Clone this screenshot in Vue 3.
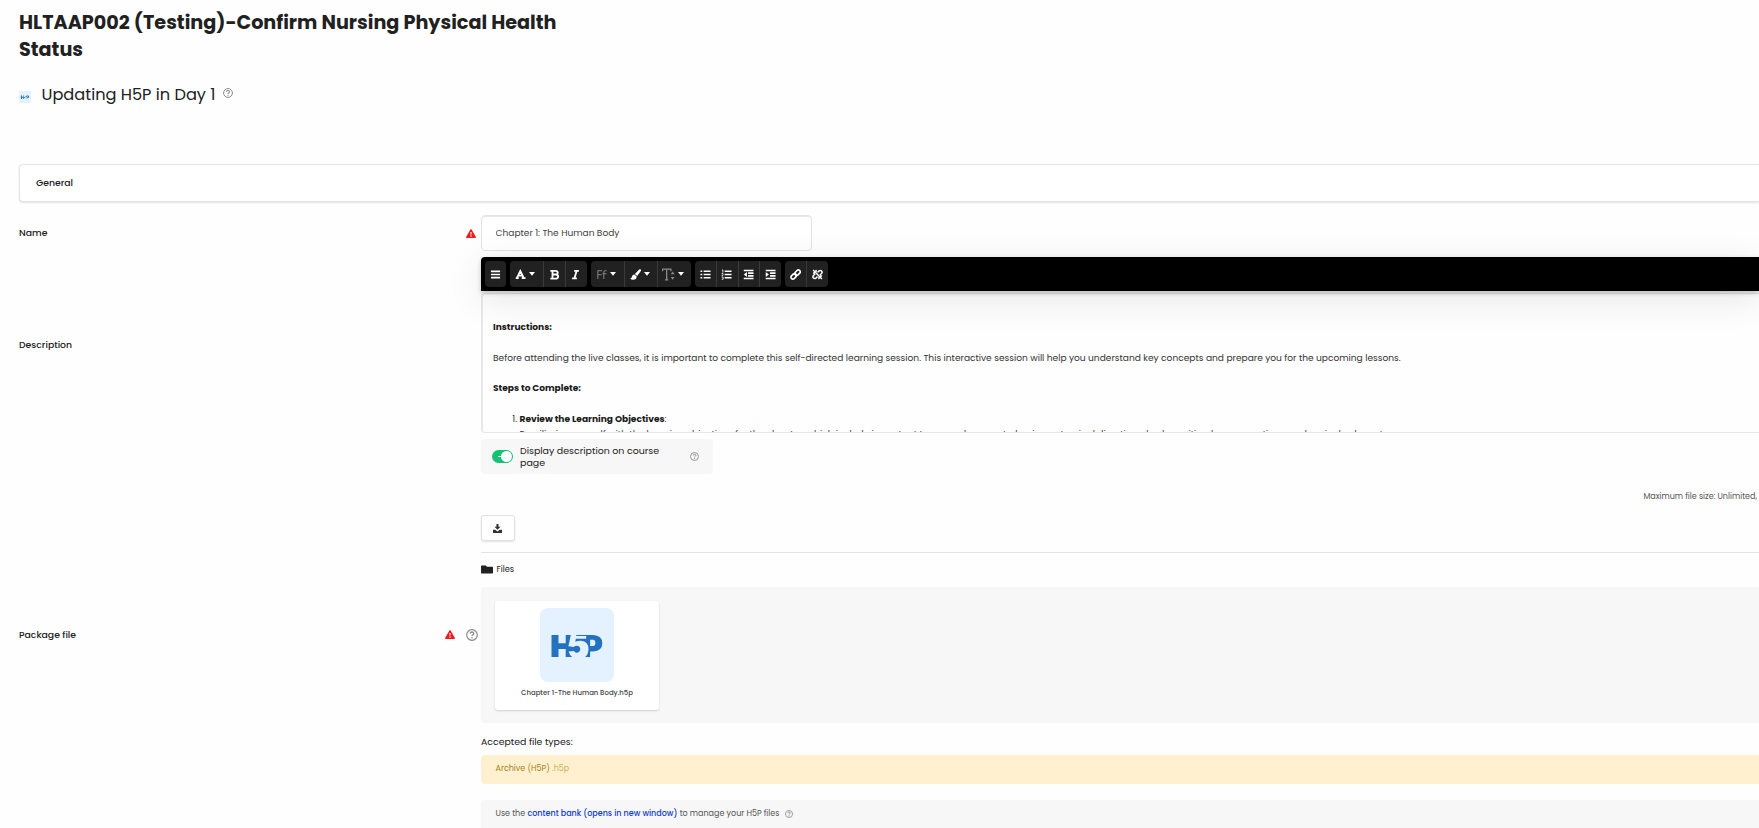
<template>
  <div class="page">
    <header class="head">
      <h1 class="title">HLTAAP002 (Testing)-Confirm Nursing Physical Health<br />Status</h1>
      <div class="subhead">
        <svg class="mini" viewBox="0 0 74 74">
          <rect width="74" height="74" rx="8" fill="#e4f2ff" />
          <use href="#h5p-mark" />
        </svg>
        <h2 class="subtitle">Updating H5P in Day 1</h2>
        <svg class="help help-title" viewBox="0 0 12 12"><use href="#help" /></svg>
      </div>
    </header>

    <section class="section-bar">General</section>

    <!-- Name -->
    <div class="row row-name">
      <div class="label">
        <span>Name</span>
        <svg class="warn" viewBox="0 0 10 9"><use href="#warn" /></svg>
      </div>
      <input class="input" type="text" v-model="name" />
    </div>

    <!-- Description -->
    <div class="row row-desc">
      <div class="label"><span>Description</span></div>
      <div class="content">
        <div class="toolbar">
          <div v-for="(group, g) in toolbar" :key="g" class="group">
            <button v-for="tool in group" :key="tool.icon" :class="['tool', { wide: tool.menu }]">
              <svg :class="['tool-icon', { big: tool.big }]" viewBox="0 0 12 12"><use :href="'#' + tool.icon" /></svg>
              <svg v-if="tool.menu" class="caret" viewBox="0 0 6 4"><path d="M0 0h6L3 3.8z" fill="#fff" /></svg>
            </button>
          </div>
        </div>
        <div class="editor">
          <p><b>Instructions:</b></p>
          <p>Before attending the live classes, it is important to complete this self-directed learning session. This interactive session will help you understand key concepts and prepare you for the upcoming lessons.</p>
          <p><b>Steps to Complete:</b></p>
          <ol>
            <li>
              <b>Review the Learning Objectives</b>:<br />
              Familiarize yourself with the learning objectives for the chapter, which include important terms and concepts, basic anatomical directions, body cavities, key connections, and major body parts.
            </li>
          </ol>
        </div>
        <div class="display-box">
          <button class="switch" @click="shown = !shown"><i :class="['knob', { off: !shown }]" /></button>
          <span class="display-text">Display description on course<br />page</span>
          <svg class="help help-sm" viewBox="0 0 12 12"><use href="#help" /></svg>
        </div>
      </div>
    </div>

    <!-- Package file -->
    <div class="row row-file">
      <div class="label">
        <span>Package file</span>
        <svg class="warn" viewBox="0 0 10 9"><use href="#warn" /></svg>
        <svg class="help help-lg" viewBox="0 0 12 12"><use href="#help" /></svg>
      </div>
      <div class="content">
        <div class="limits">Maximum file size: Unlimited,</div>
        <button class="download">
          <svg viewBox="0 0 12 12" width="9" height="9">
            <path d="M4.6 0h2.8v3.8H10L6 7.8 2 3.8h2.6zM0 7.5h3l3 2.4 3-2.4h3V12H0z" fill="#333" />
          </svg>
        </button>
        <div class="path">
          <svg viewBox="0 0 12 9" width="12" height="9"><path d="M.8.5h4l1.2 1.2h5.2q.8 0 .8.8v5.2q0 .8-.8.8H.8q-.8 0-.8-.8V1.3Q0 .5.8.5z" fill="#212121" /></svg>
          <span>Files</span>
        </div>
        <div class="files">
          <div class="card">
            <svg viewBox="0 0 74 74" width="74" height="74">
              <rect width="74" height="74" rx="8" fill="#e4f2ff" />
              <use href="#h5p-mark" />
            </svg>
            <span class="file-name">Chapter 1-The Human Body.h5p</span>
          </div>
        </div>
        <p class="accepted">Accepted file types:</p>
        <div class="types">Archive (H5P) <small>.h5p</small></div>
        <div class="bank">
          <span>Use the</span>
          <a href="#">content bank (opens in new window)</a>
          <span>to manage your H5P files</span>
          <svg class="help help-bank" viewBox="0 0 12 12"><use href="#help" /></svg>
        </div>
      </div>
    </div>

    <!-- Shared symbols -->
    <svg class="defs" width="0" height="0">
      <symbol id="help" viewBox="0 0 12 12">
        <circle cx="6" cy="6" r="5.3" fill="none" stroke="#8a8a8a" stroke-width="1.2" />
        <path d="M4.2 4.7q.2-1.7 1.8-1.7t1.8 1.5q0 .9-1 1.4-.8.4-.8 1.2" fill="none" stroke="#8a8a8a" stroke-width="1.300" />
        <circle cx="6" cy="8.8" r=".8" fill="#8a8a8a" />
      </symbol>
      <symbol id="warn" viewBox="0 0 10 9">
        <path d="M5 0q.4 0 .6.4L9.9 8q.2.9-.6 1H.7q-.8-.1-.6-1L4.4.4Q4.6 0 5 0z" fill="#ee1c1c" />
        <path d="M4.4 2.9h1.2l-.2 2.9h-.8zM4.4 6.500h1.2v1.2H4.400z" fill="#fff" />
      </symbol>
      <symbol id="h5p-mark" viewBox="0 0 74 74">
        <g fill="#2372c0">
          <path d="M11.500 27h7v8.300h7.200V27h5.100l-2.400 11.300 5.400.8q1-1.300 3-1.300a3.400 3.400 0 1 1-2.900 5.100l-5.300.7q.8 3.500 3.600 5.400h-6.500v-8h-7.200v8h-7z" />
          <path d="M36.200 27H53q9.300.4 9.300 8.200 0 7.700-9.100 8.200h-3.100V49h-5q3.400-2.800 3.400-8 0-7.500-7.300-8.300-3.500-.2-5.900 1.100l.5-3h10.400v-2.800h-10z" />
        </g>
        <path d="M50.100 31.800h3q2.300.2 2.300 3.200 0 2.900-2.300 3h-3z" fill="#e4f2ff" />
      </symbol>
      <symbol id="lines" viewBox="0 0 12 12">
        <path d="M1 2.600h10M1 6h10M1 9.400h10" stroke="#fff" stroke-width="1.700" />
      </symbol>
      <symbol id="font" viewBox="0 0 12 12">
        <path d="M2 10 5.800 2.200 9.600 10M3.500 7.200h4.300M.8 10h3.300M7.300 10h4.200" fill="none" stroke="#fff" stroke-width="2" />
      </symbol>
      <symbol id="bold" viewBox="0 0 12 12">
        <path d="M1.500 2h5.300q2.700 0 2.700 2t-2.500 2q3 0 3 2.100 0 2.400-3 2.400H1.500M3.800 2v8.400M3.800 6h3.300" fill="none" stroke="#fff" stroke-width="2" />
      </symbol>
      <symbol id="italic" viewBox="0 0 12 12">
        <path d="M4.500 2h5.200M2.300 10.300h5.200M7.300 2 4.800 10.300" fill="none" stroke="#fff" stroke-width="2" />
      </symbol>
      <symbol id="family" viewBox="0 0 12 12">
        <path d="M2 11V2h4.700M2 6.300h4.200M8.500 11V5M7 5.300h4.500M8.500 6V3.500q0-1.500 1.500-1.500h1.500" fill="none" stroke="#858585" stroke-width="1.100" />
      </symbol>
      <symbol id="brush" viewBox="0 0 12 12">
        <path d="M11.700.5q.7.900-.1 2L7.900 7.600 5.300 5.400 10 .6q1-.8 1.700-.1zM4.700 6l2.600 2.200q-.2 3.500-3.900 3.500Q1.200 11.700.2 10.300q1.700 0 2-2Q2.700 6.200 4.700 6z" fill="#fff" />
      </symbol>
      <symbol id="size" viewBox="0 0 12 12">
        <path d="M.5 3V1h7.700v2M4.300 1v10M2.800 11h3" fill="none" stroke="#8a8a8a" stroke-width="1.200" />
        <path d="M8 5.800 9.800 3.300l1.800 2.500zM8 8.300h3.600L9.800 10.800z" fill="#8a8a8a" />
      </symbol>
      <symbol id="ul" viewBox="0 0 12 12">
        <path d="M.5 2.500h2M.5 6h2M.5 9.500h2M4 2.500h7.500M4 6h7.500M4 9.500h7.500" stroke="#fff" stroke-width="1.700" />
      </symbol>
      <symbol id="ol" viewBox="0 0 12 12">
        <path d="M4 2.500h7.500M4 6h7.500M4 9.500h7.500" stroke="#fff" stroke-width="1.600" />
        <path d="M1 1h1v3M.7 5h1.500v1L1 7.300h1.400M.8 8.800h1.500v2.400H.8" fill="none" stroke="#fff" stroke-width=".9" />
      </symbol>
      <symbol id="outdent" viewBox="0 0 12 12">
        <path d="M.8 1.600h10.700M5.500 4.500h6M5.500 7.500h6M.8 10.400h10.700" stroke="#fff" stroke-width="1.700" />
        <path d="M4.300 3.300v5.400L.8 6z" fill="#fff" />
      </symbol>
      <symbol id="indent" viewBox="0 0 12 12">
        <path d="M.8 1.600h10.700M5.500 4.500h6M5.500 7.500h6M.8 10.400h10.700" stroke="#fff" stroke-width="1.700" />
        <path d="M.8 3.300v5.400L4.300 6z" fill="#fff" />
      </symbol>
      <symbol id="link" viewBox="0 0 12 12">
        <g fill="none" stroke="#fff" stroke-width="1.800">
          <rect x="4.900" y="2" width="6.600" height="4.100" rx="2" transform="rotate(-45 8.200 4.050)" />
          <rect x=".7" y="6" width="6.600" height="4.100" rx="2" transform="rotate(-45 4 8.050)" />
        </g>
      </symbol>
      <symbol id="unlink" viewBox="0 0 12 12">
        <path d="M6 3.700 7.800 2q1.400-1 2.600.1t0 2.800L8.500 6.500M6 8.300 4.200 10q-1.400 1-2.600-.1t0-2.800L3.500 5.500M1.200 1.200l9.600 9.600M1 4.300l2.200.3M4.300 1l.3 2.200M11 7.700l-2.200-.3M7.700 11l-.3-2.200" fill="none" stroke="#fff" stroke-width="1.600" />
      </symbol>
    </svg>
  </div>
</template>

<script setup>
import { ref } from 'vue'

const name = ref('Chapter 1: The Human Body')
const shown = ref(true)

const toolbar = [
  [{ icon: 'lines' }],
  [{ icon: 'font', menu: true }, { icon: 'bold' }, { icon: 'italic' }],
  [{ icon: 'family', menu: true }, { icon: 'brush', menu: true }, { icon: 'size', menu: true, big: true }],
  [{ icon: 'ul' }, { icon: 'ol' }, { icon: 'outdent' }, { icon: 'indent' }],
  [{ icon: 'link' }, { icon: 'unlink' }],
]
</script>

<style>
body {
  margin: 0;
  background: #fefefe;
  overflow: hidden;
}
</style>

<style scoped>
* { box-sizing: border-box; }

.page {
  height: 828px;
  padding-left: 19px;
  overflow: hidden;
  font-family: Poppins, Inter, 'Open Sans', sans-serif;
  font-size: 9.3px;
  line-height: 14px;
  color: #212121;
  white-space: nowrap;
}

/* ─── Heading ─── */
.head { height: 164px; padding-top: 9px; }
.title {
  margin: 0;
  font-size: 19.2px;
  font-weight: 700;
  line-height: 27px;
}
.subhead { display: flex; align-items: center; height: 24px; margin-top: 20px; }
.mini { width: 12px; height: 12px; margin: 3px 10.5px 0 0; }
.subtitle { margin: 0; font-size: 16.2px; font-weight: 400; line-height: 24px; }
.help { flex: none; display: block; }
.help-title { width: 10px; height: 10px; margin: -4px 0 0 8px; }

.section-bar {
  height: 38px;
  padding: 0 16px;
  border: 1px solid #e2e5ec;
  border-right: 0;
  border-radius: 4px 0 0 4px;
  background: #fff;
  box-shadow: 0 1px 2px rgba(0, 0, 0, 0.12);
  line-height: 36px;
  font-weight: 500;
}

/* ─── Rows ─── */
.row { display: flex; }
.label { display: flex; flex: none; align-items: center; width: 462px; font-weight: 500; }
.label .warn { margin-left: auto; }
.warn { width: 10px; height: 9px; }
.content { flex: 1; min-width: 0; }
.row-name { height: 42px; margin-top: 13px; align-items: flex-start; }
.row-name .label { height: 36px; padding-right: 5px; }
.input {
  width: 331px;
  height: 36px;
  padding: 0 13.5px;
  border: 1px solid #e3e3e3;
  border-radius: 4px;
  background: #fff;
  box-shadow: inset 0 1px 1px rgba(0, 0, 0, 0.1);
  color: #424242;
  font: inherit;
  font-size: 9.05px;
  outline: none;
}
.row-desc { height: 217px; }
.row-desc .label { height: 176px; }

/* ─── Toolbar ─── */
.toolbar {
  position: relative;
  display: flex;
  gap: 4px;
  height: 34px;
  padding: 4px;
  border-radius: 4px 0 0 0;
  background: #000;
  box-shadow: 0 2px 4px rgba(0, 0, 0, 0.22), 0 8px 36px rgba(0, 0, 0, 0.1);
}
.group { display: flex; border-radius: 4px; overflow: hidden; background: #212121; }
.tool {
  display: flex;
  align-items: center;
  justify-content: center;
  gap: 3.5px;
  width: 21.8px;
  padding: 0 1px 0 0;
  border: 0;
  background: none;
}
.tool:first-child { width: 21px; padding: 0; }
.tool + .tool { border-left: 1px solid #3a3a3a; }
.tool.wide { width: 33.3px; padding-right: 3px; }
.tool-icon { width: 11px; height: 11px; }
.tool-icon.big { width: 13px; height: 13px; }
.caret { width: 6px; height: 4px; }

/* ─── Editor ─── */
.editor {
  height: 140px;
  margin-top: 2px;
  padding: 26px 10px 0;
  border: 1px solid #e8e8e8;
  border-left-width: 2px;
  border-right: 0;
  border-radius: 4px 0 0 4px;
  overflow: hidden;
  font-size: 9.07px;
  color: #333;
}
.editor p { margin: 0 0 16px; }
.editor p:first-child { margin-bottom: 17px; }
.editor b { color: #1a1a1a; }
.editor ol { margin: 0; padding-left: 26.5px; line-height: 15px; }
.display-box {
  display: flex;
  align-items: center;
  width: 232px;
  height: 35px;
  margin-top: 6px;
  padding: 0 14px 0 11px;
  border-radius: 4px;
  background: #f7f7f7;
}
.switch {
  display: flex;
  align-items: center;
  width: 21px;
  height: 13px;
  padding: 0 1px;
  border: 0;
  border-radius: 7px;
  background: linear-gradient(#fff, #fff) 6px 6px / 4px 1px no-repeat #14c274;
}
.knob { width: 11px; height: 11px; margin-left: auto; border-radius: 50%; background: #fff; }
.knob.off { margin-left: 0; }
.display-text { margin-left: 7px; font-size: 9.45px; line-height: 12px; }
.help-sm { width: 9px; height: 9px; margin-left: auto; }

/* ─── Package file ─── */
.row-file .label { height: 321px; padding-right: 3px; }
.row-file .help-lg { width: 12px; height: 12px; margin-left: 11px; }
.limits { height: 41px; padding: 16px 2px 0 0; font-size: 8px; text-align: right; color: #555; }
.download {
  display: flex;
  align-items: center;
  justify-content: center;
  width: 34px;
  height: 26px;
  padding: 0 1px 0 0;
  border: 1px solid #dfe2ec;
  border-radius: 3px;
  background: #fff;
  box-shadow: 0 1px 2px rgba(0, 0, 0, 0.12);
}
.path {
  display: flex;
  align-items: center;
  gap: 3.5px;
  height: 35px;
  margin-top: 11px;
  padding-bottom: 1px;
  border-top: 1px solid #e3e3e3;
  font-size: 8.2px;
}
.path span { margin-top: -1px; }
.files { height: 136px; padding: 14px; border-radius: 4px 0 0 4px; background: #f7f7f7; }
.card {
  display: flex;
  flex-direction: column;
  align-items: center;
  width: 164px;
  height: 109px;
  padding-top: 7px;
  border-radius: 3px;
  background: #fff;
  box-shadow: 0 1px 2px rgba(0, 0, 0, 0.16);
}
.file-name { margin-top: 4px; font-size: 6.93px; font-weight: 500; color: #444; }
.accepted { margin: 12px 0 6px; font-size: 9.4px; }
.types {
  height: 29px;
  padding-left: 14.5px;
  border-radius: 4px 0 0 4px;
  background: #fff1d0;
  line-height: 28px;
  font-size: 8px;
  color: #a5811c;
}
.types small { font-size: 8px; color: #d5b058; }
.bank {
  display: flex;
  align-items: center;
  gap: 2.3px;
  height: 40px;
  margin-top: 16px;
  padding: 0 0 12px 14.5px;
  border-radius: 4px 0 0 0;
  background: #f7f7f7;
  font-size: 8px;
  color: #555;
}
.bank a { color: #1040cc; font-weight: 500; text-decoration: none; }
.help-bank { width: 8px; height: 8px; margin: -1px 0 0 3px; }
.defs { display: block; }
</style>
